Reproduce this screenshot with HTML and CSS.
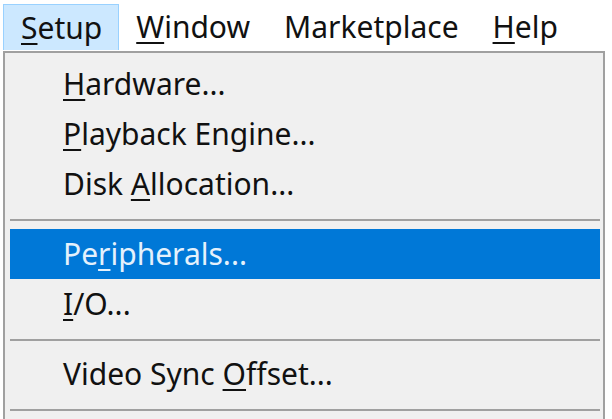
FILE: index.html
```html
<!DOCTYPE html>
<html lang="en">
<head>
    <meta charset="UTF-8">
    <title>Setup menu</title>
    <link rel="stylesheet" href="styles.css">
</head>
<body>
    <div class="menubar">
        <span class="menu open"><u>S</u>etup</span>
        <span class="menu"><u>W</u>indow</span>
        <span class="menu">Marketplace</span>
        <span class="menu"><u>H</u>elp</span>
    </div>
    <div class="dropdown">
        <div class="item"><u>H</u>ardware...</div>
        <div class="item"><u>P</u>layback Engine...</div>
        <div class="item">Disk <u>A</u>llocation...</div>
        <div class="sep"></div>
        <div class="item active">Pe<u>r</u>ipherals...</div>
        <div class="item"><u>I</u>/O...</div>
        <div class="sep"></div>
        <div class="item">Video Sync <u>O</u>ffset...</div>
        <div class="sep"></div>
    </div>
</body>
</html>
```
FILE: styles.css
```css
body {
    margin: 0;
    padding: 0;
    background: #fff;
    font-family: "Noto Sans", "Open Sans", sans-serif;
    font-size: 30px;
    color: #111;
    width: 612px;
    height: 419px;
    overflow: hidden;
}
u {
    text-decoration: underline;
    text-decoration-thickness: 2px;
    text-underline-offset: 4px;
}
.menubar {
    display: flex;
    height: 51px;
    padding: 4px 0 0 3px;
    box-sizing: border-box;
}
.menu {
    height: 46px;
    line-height: 46px;
    padding: 0 17px;
    box-sizing: border-box;
}
.menu.open {
    background: #cce8ff;
    border: 1px solid #99d1ff;
    border-bottom: none;
    padding: 0 16px 0 17px;
}
.dropdown {
    width: 602px;
    margin-left: 3px;
    background: #f0f0f0;
    border: 2px solid #a0a0a0;
    border-bottom: none;
    box-sizing: border-box;
    padding: 6px 3px 0 5px;
    height: 368px;
}
.item {
    height: 50px;
    line-height: 50px;
    padding-left: 53px;
}
.item.active {
    background: #0078d7;
    color: #e4f1fc;
}
.sep {
    height: 2px;
    background: #a0a0a0;
    margin: 10px 0 8px;
}
```
